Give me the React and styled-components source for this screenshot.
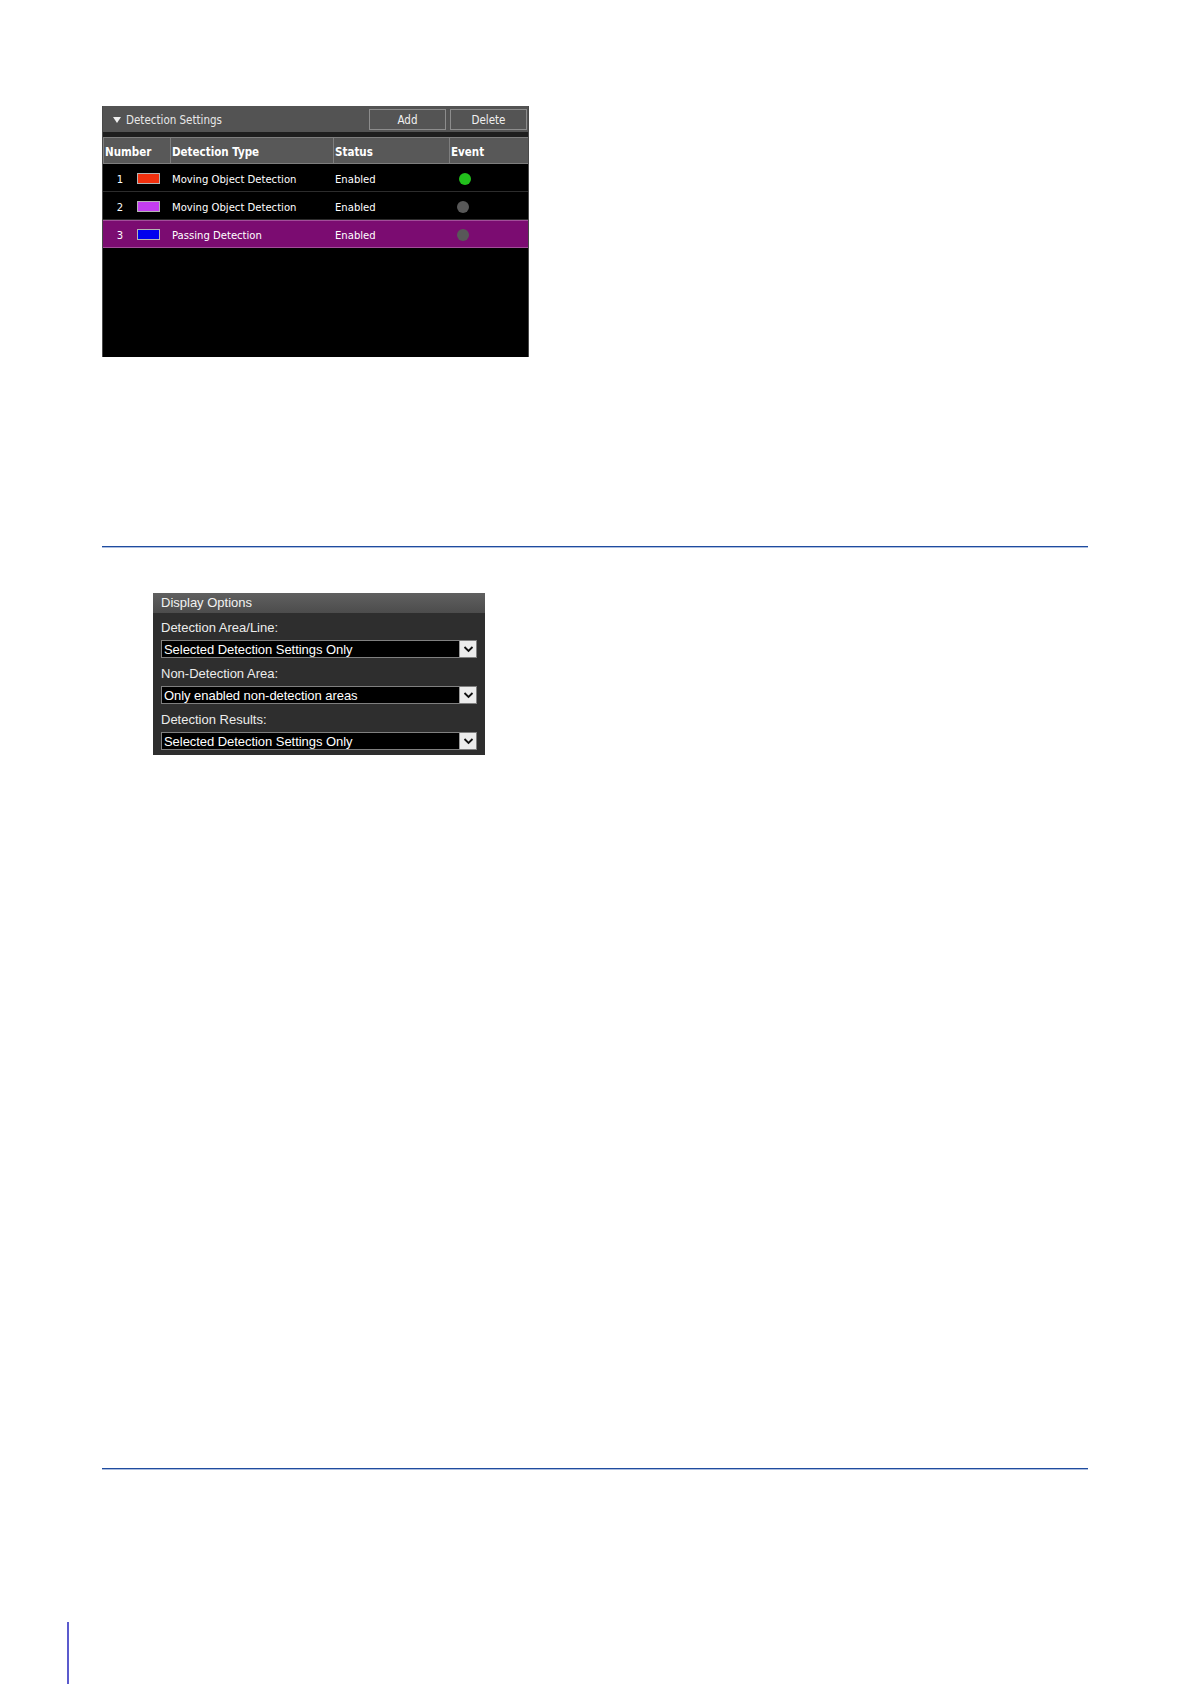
import React from "react";
import styled, { createGlobalStyle } from "styled-components";

const Global = createGlobalStyle`
  html, body { margin: 0; padding: 0; background: #ffffff; }
  * { box-sizing: border-box; }
`;

const Page = styled.div`
  width: 1190px;
  height: 1684px;
  display: flex;
  flex-direction: column;
  align-items: flex-start;
  background: #ffffff;
  overflow: hidden;
`;

const uiFont = `"DejaVu Sans Condensed", "Liberation Sans", sans-serif`;

/* ---------- Detection settings panel ---------- */
const DetectionPanel = styled.section`
  margin-top: 106px;
  margin-left: 102px;
  width: 427px;
  height: 251px;
  background: #000;
  display: flex;
  flex-direction: column;
  font-family: ${uiFont};
  color: #fff;
  border-left: 1px solid #4a4a4a;
  border-right: 1px solid #4a4a4a;
`;

const TitleBar = styled.div`
  height: 26px;
  background: #535353;
  display: flex;
  align-items: center;
  padding: 0 1px 0 10px;
  gap: 4px;
`;

const Caret = styled.span`
  width: 0;
  height: 0;
  border-left: 4.5px solid transparent;
  border-right: 4.5px solid transparent;
  border-top: 6px solid #f0f0f0;
  margin-right: 1px;
  margin-top: 1px;
`;

const Title = styled.span`
  font-size: 11.5px;
  color: #e8e8e8;
  flex: 1;
  padding-top: 2px;
`;

const BarButton = styled.button`
  width: 77px;
  height: 21px;
  background: #545454;
  border: 1px solid #8c8c8c;
  color: #f0f0f0;
  font-family: ${uiFont};
  font-size: 11.5px;
  padding: 2px 0 0;
  cursor: pointer;
`;

const Divider = styled.div`
  height: 5px;
  background: #1e1e1e;
`;

const Grid = styled.div`
  display: grid;
  grid-template-columns: 68px 163px 116px 1fr;
`;

const HeaderRow = styled(Grid)`
  height: 27px;
  background: #585858;
`;

const HeaderCell = styled.div`
  display: flex;
  align-items: center;
  padding: 2px 0 0 1px;
  font-weight: bold;
  font-size: 11.5px;
  color: #fff;
  border-top: 1px solid #7e7e7e;
  border-bottom: 1px solid #7e7e7e;
  border-right: 1px solid #7e7e7e;
  &:first-child { border-left: 1px solid #7e7e7e; }
  &:last-child { border-right: none; }
`;

const Row = styled(Grid)`
  height: 28px;
  background: ${(p) => (p.$selected ? "#7b0c71" : "#000")};
  border-bottom: 1px solid ${(p) => (p.$selected ? "#a24c99" : "#2c2c2c")};
  border-top: 1px solid ${(p) => (p.$selected ? "#a24c99" : "transparent")};
  font-size: 11.2px;
`;

const Cell = styled.div`
  display: flex;
  align-items: center;
  padding: 2px 0 0 1px;
  white-space: nowrap;
`;

const NumberCell = styled.div`
  display: flex;
  align-items: center;
  padding-top: 1px;
`;

const Num = styled.span`
  width: 34px;
  text-align: center;
  padding-top: 1px;
`;

const Swatch = styled.span`
  width: 23px;
  height: 11px;
  border: 1px solid #b4b4b4;
  background: ${(p) => p.$color};
`;

const Dot = styled.span`
  width: 12px;
  height: 12px;
  border-radius: 50%;
  margin-top: -1px;
  margin-left: ${(p) => (p.$on ? "8px" : "6px")};
  background: ${(p) => (p.$on ? "#22c01c" : "#585858")};
`;

const PanelBody = styled.div`
  flex: 1;
  background: #000;
`;

/* ---------- page rules ---------- */
const Rule = styled.div`
  margin-top: ${(p) => p.$top}px;
  margin-left: 102px;
  width: 986px;
  height: 1px;
  background: #1f4c9f;
  box-shadow: 0 0.5px 0 #5a7cc0;
`;

const SideMark = styled.div`
  margin-top: 153px;
  margin-left: 67px;
  width: 2px;
  height: 62px;
  background: #5b5bcd;
`;

/* ---------- Display options panel ---------- */
const OptionsPanel = styled.section`
  margin-top: 46px;
  margin-left: 153px;
  width: 332px;
  height: 162px;
  background: #2e2e2e;
  font-family: "Liberation Sans", Arial, sans-serif;
  display: flex;
  flex-direction: column;
`;

const OptionsHeader = styled.div`
  height: 20px;
  line-height: 20px;
  padding-left: 8px;
  font-size: 13px;
  color: #f2f2f2;
  background: linear-gradient(#606060, #4c4c4c);
`;

const OptionsBody = styled.div`
  padding: 0 8px;
  display: flex;
  flex-direction: column;
`;

const Label = styled.div`
  font-size: 13px;
  line-height: 15px;
  color: #ececec;
  padding: ${(p) => (p.$first ? "7px 0 5px" : "8px 0 5px")};
`;

const Select = styled.div`
  height: 18px;
  background: #000;
  border: 1px solid #808080;
  display: flex;
  align-items: center;
`;

const SelectText = styled.span`
  flex: 1;
  padding-left: 2px;
  font-size: 13px;
  line-height: 15px;
  color: #fff;
  white-space: nowrap;
  letter-spacing: -0.05px;
`;

const SelectArrow = styled.span`
  width: 17px;
  height: 16px;
  background: #ececec;
  border-left: 1px solid #9a9a9a;
  display: flex;
  align-items: center;
  justify-content: center;
`;

function Chevron() {
  return (
    <svg width="11" height="8" viewBox="0 0 11 8">
      <path d="M1.5 2 L5.5 6 L9.5 2" fill="none" stroke="#111" strokeWidth="1.8" />
    </svg>
  );
}

const rows = [
  { n: 1, color: "#f2300e", type: "Moving Object Detection", on: true },
  { n: 2, color: "#c43ef0", type: "Moving Object Detection", on: false },
  { n: 3, color: "#0000ee", type: "Passing Detection", on: false, selected: true },
];

const options = [
  { label: "Detection Area/Line:", value: "Selected Detection Settings Only" },
  { label: "Non-Detection Area:", value: "Only enabled non-detection areas" },
  { label: "Detection Results:", value: "Selected Detection Settings Only" },
];

export default function App() {
  return (
    <>
      <Global />
      <Page>
        <DetectionPanel>
          <TitleBar>
            <Caret />
            <Title>Detection Settings</Title>
            <BarButton>Add</BarButton>
            <BarButton>Delete</BarButton>
          </TitleBar>
          <Divider />
          <HeaderRow>
            <HeaderCell>Number</HeaderCell>
            <HeaderCell>Detection Type</HeaderCell>
            <HeaderCell>Status</HeaderCell>
            <HeaderCell>Event</HeaderCell>
          </HeaderRow>
          {rows.map((r) => (
            <Row key={r.n} $selected={r.selected}>
              <NumberCell>
                <Num>{r.n}</Num>
                <Swatch $color={r.color} />
              </NumberCell>
              <Cell>{r.type}</Cell>
              <Cell>Enabled</Cell>
              <Cell>
                <Dot $on={r.on} />
              </Cell>
            </Row>
          ))}
          <PanelBody />
        </DetectionPanel>

        <Rule $top={189} />

        <OptionsPanel>
          <OptionsHeader>Display Options</OptionsHeader>
          <OptionsBody>
            {options.map((o, i) => (
              <React.Fragment key={o.label}>
                <Label $first={i === 0}>{o.label}</Label>
                <Select>
                  <SelectText>{o.value}</SelectText>
                  <SelectArrow>
                    <Chevron />
                  </SelectArrow>
                </Select>
              </React.Fragment>
            ))}
          </OptionsBody>
        </OptionsPanel>

        <Rule $top={713} />
        <SideMark />
      </Page>
    </>
  );
}
